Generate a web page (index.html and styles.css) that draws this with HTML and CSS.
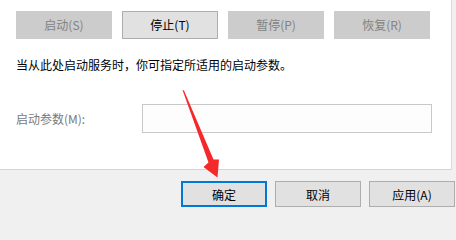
FILE: index.html
```html
<!DOCTYPE html>
<html lang="zh-CN">
<head>
<meta charset="utf-8">
<link rel="stylesheet" href="styles.css">
</head>
<body>
<div class="dialog">
  <div class="panel">
    <div class="svc-buttons">
      <button class="btn btn-disabled">启动(S)</button>
      <button class="btn">停止(T)</button>
      <button class="btn btn-disabled">暂停(P)</button>
      <button class="btn btn-disabled">恢复(R)</button>
    </div>
    <p class="hint">当从此处启动服务时，你可指定所适用的启动参数。</p>
    <div class="param-row">
      <span class="param-label">启动参数(M):</span>
      <div class="param-input"></div>
    </div>
  </div>
  <div class="footer">
    <button class="fbtn fbtn-default">确定</button>
    <button class="fbtn">取消</button>
    <button class="fbtn">应用(A)</button>
  </div>
  <svg class="arrow" width="456" height="213" viewBox="0 0 456 213">
    <polygon points="182.5,90 184,90.5 213.5,159.5 219,159.5 217.5,177.5 203.5,167 208.5,162.5" fill="#f5282a"/>
  </svg>
</div>
</body>
</html>
```

FILE: styles.css
```css
html, body {
  margin: 0;
  padding: 0;
}
body {
  width: 456px;
  height: 213px;
  overflow: hidden;
  background: #f0f0f0;
  font-family: "Noto Sans CJK SC", "Microsoft YaHei", sans-serif;
  font-size: 12px;
}
.dialog {
  position: relative;
  width: 456px;
  height: 213px;
}
.panel {
  box-sizing: border-box;
  width: 452px;
  height: 170px;
  background: #ffffff;
  border-right: 1px solid #dadada;
  border-bottom: 1px solid #d4d4d4;
  padding: 11px 0 0 16px;
}
.svc-buttons {
  display: flex;
  gap: 10px;
}
.btn {
  box-sizing: border-box;
  width: 96px;
  height: 28px;
  margin: 0;
  padding: 0;
  background: #e1e1e1;
  border: 1px solid #adadad;
  color: #000;
  font-family: inherit;
  font-size: 12px;
  line-height: 26px;
}
.btn-disabled {
  background: #cccccc;
  border-color: #cccccc;
  color: #838383;
}
.hint {
  margin: 18px 0 0 0;
  line-height: 16px;
  color: #000;
}
.param-row {
  display: flex;
  align-items: center;
  margin-top: 31px;
}
.param-label {
  width: 126px;
  color: #7a7a7a;
  line-height: 16px;
}
.param-input {
  box-sizing: border-box;
  width: 290px;
  height: 29px;
  border: 1px solid #c9c9c9;
  background: #fdfdfd;
}
.footer {
  display: flex;
  justify-content: flex-end;
  gap: 8px;
  padding: 11px 1px 0 0;
}
.fbtn {
  box-sizing: border-box;
  width: 86px;
  height: 26px;
  margin: 0;
  padding: 0;
  background: #e1e1e1;
  border: 1px solid #adadad;
  color: #000;
  font-family: inherit;
  font-size: 12px;
}
.fbtn-default {
  border: 2px solid #0078d7;
}
.arrow {
  position: absolute;
  left: 0;
  top: 0;
  pointer-events: none;
}
```
